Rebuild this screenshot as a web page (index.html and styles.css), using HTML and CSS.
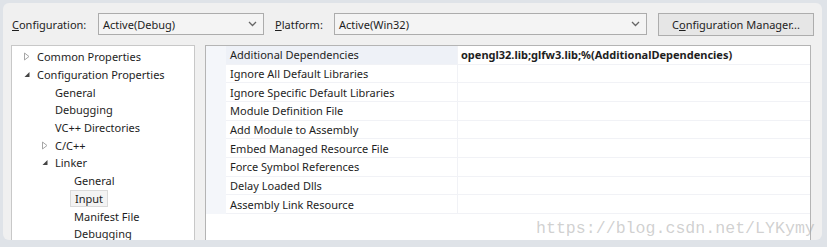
FILE: index.html
```html
<!DOCTYPE html>
<html lang="en">
<head>
    <meta charset="UTF-8">
    <title>Property Pages</title>
    <link rel="stylesheet" href="styles.css">
</head>
<body>
    <div class="window">
        <div class="toolbar">
            <span class="label"><u>C</u>onfiguration:</span>
            <div class="combo combo-config">
                <span>Active(Debug)</span>
                <svg class="chev" width="9" height="6" viewBox="0 0 9 6"><path d="M1 1 L4.5 4.5 L8 1" fill="none" stroke="#666" stroke-width="1.3"/></svg>
            </div>
            <span class="label label-platform"><u>P</u>latform:</span>
            <div class="combo combo-platform">
                <span>Active(Win32)</span>
                <svg class="chev" width="9" height="6" viewBox="0 0 9 6"><path d="M1 1 L4.5 4.5 L8 1" fill="none" stroke="#666" stroke-width="1.3"/></svg>
            </div>
            <button class="btn">C<u>o</u>nfiguration Manager...</button>
        </div>

        <div class="panes">
            <div class="tree">
                <div class="node lvl1"><svg class="tri" width="8" height="9" viewBox="0 0 8 9"><path d="M1.5 1 L6 4.5 L1.5 8 Z" fill="none" stroke="#a6a6a6"/></svg>Common Properties</div>
                <div class="node lvl1"><svg class="tri" width="8" height="9" viewBox="0 0 8 9"><path d="M6.5 2 L6.5 7 L1.5 7 Z" fill="#444"/></svg>Configuration Properties</div>
                <div class="node lvl2">General</div>
                <div class="node lvl2">Debugging</div>
                <div class="node lvl2">VC++ Directories</div>
                <div class="node lvl2 has-tri"><svg class="tri" width="8" height="9" viewBox="0 0 8 9"><path d="M1.5 1 L6 4.5 L1.5 8 Z" fill="none" stroke="#a6a6a6"/></svg>C/C++</div>
                <div class="node lvl2 has-tri"><svg class="tri" width="8" height="9" viewBox="0 0 8 9"><path d="M6.5 2 L6.5 7 L1.5 7 Z" fill="#444"/></svg>Linker</div>
                <div class="node lvl3">General</div>
                <div class="node lvl3"><span class="selected">Input</span></div>
                <div class="node lvl3">Manifest File</div>
                <div class="node lvl3">Debugging</div>
            </div>

            <div class="grid">
                <div class="row active"><div class="name">Additional Dependencies</div><div class="value">opengl32.lib;glfw3.lib;%(AdditionalDependencies)</div></div>
                <div class="row"><div class="name">Ignore All Default Libraries</div><div class="value"></div></div>
                <div class="row"><div class="name">Ignore Specific Default Libraries</div><div class="value"></div></div>
                <div class="row"><div class="name">Module Definition File</div><div class="value"></div></div>
                <div class="row"><div class="name">Add Module to Assembly</div><div class="value"></div></div>
                <div class="row"><div class="name">Embed Managed Resource File</div><div class="value"></div></div>
                <div class="row"><div class="name">Force Symbol References</div><div class="value"></div></div>
                <div class="row"><div class="name">Delay Loaded Dlls</div><div class="value"></div></div>
                <div class="row"><div class="name">Assembly Link Resource</div><div class="value"></div></div>
            </div>
        </div>

        <div class="watermark">https://blog.csdn.net/LYKymy</div>
    </div>
</body>
</html>
```

FILE: styles.css
```css
body {
    margin: 0;
    background-color: #dfe3e8;
    font-family: "Noto Sans", "Open Sans", sans-serif;
    font-size: 11px;
    color: #1e1e1e;
}
.window {
    position: relative;
    margin: 3px 5px 0 3px;
    height: 237px;
    background-color: #f0f0f0;
    border-radius: 6px;
    overflow: hidden;
}
.toolbar {
    display: flex;
    align-items: center;
    height: 22px;
    padding: 10px 0 0 9px;
}
.label {
    width: 86px;
}
.label-platform {
    width: 59px;
    margin-left: 11px;
}
.combo {
    box-sizing: border-box;
    height: 22px;
    display: flex;
    align-items: center;
    justify-content: space-between;
    padding: 0 6px 0 4px;
    background-color: #f4f4f4;
    border: 1px solid #acacac;
}
.combo-config {
    width: 166px;
}
.combo-platform {
    width: 313px;
}
.btn {
    box-sizing: border-box;
    margin-left: 11px;
    width: 156px;
    height: 23px;
    font: inherit;
    color: inherit;
    background-color: #e6e6e6;
    border: 1px solid #adadad;
    padding: 0;
}
.panes {
    display: flex;
    margin-top: 10px;
    padding-left: 8px;
}
.tree {
    box-sizing: border-box;
    width: 184px;
    height: 200px;
    background-color: #fff;
    border: 1px solid #c8c8c8;
    padding-top: 2px;
}
.node {
    display: flex;
    align-items: center;
    height: 17.7px;
    white-space: nowrap;
}
.lvl1 {
    padding-left: 11px;
}
.lvl2 {
    padding-left: 43px;
}
.lvl2.has-tri {
    padding-left: 29px;
}
.lvl3 {
    padding-left: 62px;
}
.tri {
    margin-right: 6px;
}
.selected {
    padding: 0 4px;
    margin-left: -4px;
    background-color: #f3f3f3;
    border: 1px solid #dadada;
    line-height: 15px;
}
.grid {
    box-sizing: border-box;
    width: 606px;
    height: 200px;
    margin-left: 10px;
    background-color: #fff;
    border: 1px solid #b4b4b4;
    border-bottom: none;
    padding-left: 20px;
    background-image: linear-gradient(#f4f6fa, #f4f6fa);
    background-size: 20px 168px;
    background-repeat: no-repeat;
}
.row {
    display: flex;
    height: 18.67px;
    align-items: center;
    border-bottom: 1px solid #f1f2f6;
    box-sizing: border-box;
}
.name {
    box-sizing: border-box;
    width: 232px;
    height: 100%;
    padding-left: 4px;
    display: flex;
    align-items: center;
    border-right: 1px solid #f1f2f6;
}
.active .name {
    background-color: #eef1f7;
}
.value {
    padding-left: 3px;
    font-weight: bold;
}
.watermark {
    position: absolute;
    left: 533px;
    top: 216px;
    font-family: "Liberation Mono", monospace;
    font-size: 16.6px;
    color: rgba(170, 170, 170, 0.55);
}
```
